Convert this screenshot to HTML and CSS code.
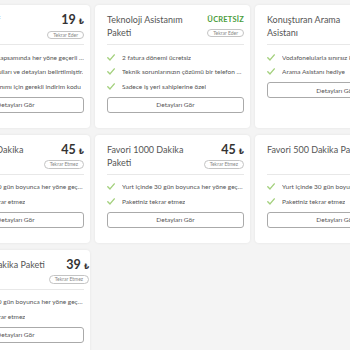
FILE: index.html
```html
<!DOCTYPE html>
<html lang="tr">
<head>
<meta charset="utf-8">
<title>Paketler</title>
<link rel="stylesheet" href="styles.css">
</head>
<body>
<div class="grid">

  <div class="card">
    <div class="head">
      <div class="title">Avantajlı Tarif</div>
      <div class="meta"><div class="price">19 <span class="tl">₺</span></div><span class="badge">Tekrar Eder</span></div>
    </div>
    <ul class="feats">
      <li><svg class="chk" viewBox="0 0 8 7"><path d="M0.8 3.8 L3 5.9 L7.3 0.9"/></svg><span>Tüm yurt içi kapsamında her yöne geçerli  dakika</span></li>
      <li><svg class="chk" viewBox="0 0 8 7"><path d="M0.8 3.8 L3 5.9 L7.3 0.9"/></svg><span>Kullanım koşulları ve detayları belirtilmiştir.</span></li>
      <li><svg class="chk" viewBox="0 0 8 7"><path d="M0.8 3.8 L3 5.9 L7.3 0.9"/></svg><span>İnternet kullanımı için gerekli indirim kodu</span></li>
    </ul>
    <button class="btn">Detayları Gör</button>
  </div>

  <div class="card">
    <div class="head">
      <div class="title">Teknoloji Asistanım<br>Paketi</div>
      <div class="meta"><div class="price free">ÜCRETSİZ</div><span class="badge">Tekrar Eder</span></div>
    </div>
    <ul class="feats">
      <li><svg class="chk" viewBox="0 0 8 7"><path d="M0.8 3.8 L3 5.9 L7.3 0.9"/></svg><span>2 fatura dönemi ücretsiz</span></li>
      <li><svg class="chk" viewBox="0 0 8 7"><path d="M0.8 3.8 L3 5.9 L7.3 0.9"/></svg><span>Teknik sorunlarınızın çözümü bir telefon kadar yakın</span></li>
      <li><svg class="chk" viewBox="0 0 8 7"><path d="M0.8 3.8 L3 5.9 L7.3 0.9"/></svg><span>Sadece iş yeri sahiplerine özel</span></li>
    </ul>
    <button class="btn">Detayları Gör</button>
  </div>

  <div class="card">
    <div class="head">
      <div class="title">Konuşturan Arama<br>Asistanı</div>
      <div class="meta"><div class="price free">ÜCRETSİZ</div><span class="badge">Tekrar Eder</span></div>
    </div>
    <ul class="feats">
      <li><svg class="chk" viewBox="0 0 8 7"><path d="M0.8 3.8 L3 5.9 L7.3 0.9"/></svg><span>Vodafonelularla sınırsız konuşma</span></li>
      <li><svg class="chk" viewBox="0 0 8 7"><path d="M0.8 3.8 L3 5.9 L7.3 0.9"/></svg><span>Arama Asistanı hediye</span></li>
    </ul>
    <button class="btn">Detayları Gör</button>
  </div>

  <div class="card">
    <div class="head">
      <div class="title">Favori 2000 Dakika<br>Paketi</div>
      <div class="meta"><div class="price">45 <span class="tl">₺</span></div><span class="badge">Tekrar Etmez</span></div>
    </div>
    <ul class="feats">
      <li><svg class="chk" viewBox="0 0 8 7"><path d="M0.8 3.8 L3 5.9 L7.3 0.9"/></svg><span>Yurt içinde 30 gün boyunca her yöne geçerli 2000 dakika</span></li>
      <li><svg class="chk" viewBox="0 0 8 7"><path d="M0.8 3.8 L3 5.9 L7.3 0.9"/></svg><span>Paketiniz tekrar etmez</span></li>
    </ul>
    <button class="btn">Detayları Gör</button>
  </div>

  <div class="card">
    <div class="head">
      <div class="title">Favori 1000 Dakika<br>Paketi</div>
      <div class="meta"><div class="price">45 <span class="tl">₺</span></div><span class="badge">Tekrar Etmez</span></div>
    </div>
    <ul class="feats">
      <li><svg class="chk" viewBox="0 0 8 7"><path d="M0.8 3.8 L3 5.9 L7.3 0.9"/></svg><span>Yurt içinde 30 gün boyunca her yöne geçerli 1000 dakika</span></li>
      <li><svg class="chk" viewBox="0 0 8 7"><path d="M0.8 3.8 L3 5.9 L7.3 0.9"/></svg><span>Paketiniz tekrar etmez</span></li>
    </ul>
    <button class="btn">Detayları Gör</button>
  </div>

  <div class="card">
    <div class="head">
      <div class="title">Favori 500 Dakika Paketi</div>
      <div class="meta"><div class="price">29 <span class="tl">₺</span></div><span class="badge">Tekrar Etmez</span></div>
    </div>
    <ul class="feats">
      <li><svg class="chk" viewBox="0 0 8 7"><path d="M0.8 3.8 L3 5.9 L7.3 0.9"/></svg><span>Yurt içinde 30 gün boyunca her yöne geçerli 500 dakika</span></li>
      <li><svg class="chk" viewBox="0 0 8 7"><path d="M0.8 3.8 L3 5.9 L7.3 0.9"/></svg><span>Paketiniz tekrar etmez</span></li>
    </ul>
    <button class="btn">Detayları Gör</button>
  </div>

  <div class="card">
    <div class="head">
      <div class="title">Favori 250 Dakika Paketi</div>
      <div class="meta"><div class="price">39 <span class="tl">₺</span></div><span class="badge">Tekrar Etmez</span></div>
    </div>
    <ul class="feats">
      <li><svg class="chk" viewBox="0 0 8 7"><path d="M0.8 3.8 L3 5.9 L7.3 0.9"/></svg><span>Yurt içinde 30 gün boyunca her yöne geçerli 250 dakika</span></li>
      <li><svg class="chk" viewBox="0 0 8 7"><path d="M0.8 3.8 L3 5.9 L7.3 0.9"/></svg><span>Paketiniz tekrar etmez</span></li>
    </ul>
    <button class="btn">Detayları Gör</button>
  </div>

</div>
</body>
</html>
```

FILE: styles.css
```css
html, body {
  margin: 0;
  padding: 0;
  background: #f4f4f4;
  overflow: hidden;
  font-family: Lato, "Open Sans", "DejaVu Sans", sans-serif;
}

.grid {
  display: grid;
  grid-template-columns: repeat(3, 155px);
  column-gap: 5px;
  row-gap: 7px;
  margin-left: -65px;
  padding-top: 5px;
}

.card {
  display: flex;
  flex-direction: column;
  background: #fff;
  border-radius: 4px;
  box-shadow: 0 0 3px rgba(0, 0, 0, 0.07);
  padding: 8px 6px 15px 12px;
}

.head {
  display: flex;
  justify-content: space-between;
  gap: 4px;
  height: 31px;
  border-bottom: 1px solid #e8e8e8;
}

.title {
  font-size: 9px;
  line-height: 13px;
  color: #555;
  white-space: nowrap;
}

.meta {
  display: flex;
  flex-direction: column;
  align-items: flex-end;
}

.price {
  font-size: 12.5px;
  line-height: 13px;
  font-weight: 700;
  color: #333;
  white-space: nowrap;
}

.price .tl {
  font-size: 7.5px;
  font-weight: 700;
  font-family: "DejaVu Sans", sans-serif;
}

.price.free {
  font-size: 7.5px;
  color: #4a9d3b;
  letter-spacing: 0.2px;
}

.badge {
  margin-top: 2.5px;
  height: 8.5px;
  box-sizing: border-box;
  border: 1px solid #c4c4c4;
  border-radius: 5px;
  padding: 0 5px;
  font-size: 5px;
  line-height: 6.5px;
  color: #888;
  white-space: nowrap;
}

.feats {
  list-style: none;
  margin: 5px 0 0;
  padding: 0;
}

.feats li {
  display: flex;
  align-items: center;
  height: 14.5px;
  font-size: 6.5px;
  color: #555;
}

.feats li span {
  min-width: 0;
  overflow: hidden;
  white-space: nowrap;
  text-overflow: ellipsis;
}

.chk {
  flex: none;
  width: 8px;
  height: 7px;
  margin-right: 7px;
  fill: none;
  stroke: #a3d07c;
  stroke-width: 1.4;
  stroke-linecap: round;
  stroke-linejoin: round;
}

.btn {
  margin-top: 3px;
  height: 16px;
  width: 100%;
  box-sizing: border-box;
  background: #fff;
  border: 1px solid #aaa;
  border-radius: 3px;
  font-family: Lato, "Open Sans", sans-serif;
  font-size: 6.5px;
  color: #555;
  padding: 0;
}
```
